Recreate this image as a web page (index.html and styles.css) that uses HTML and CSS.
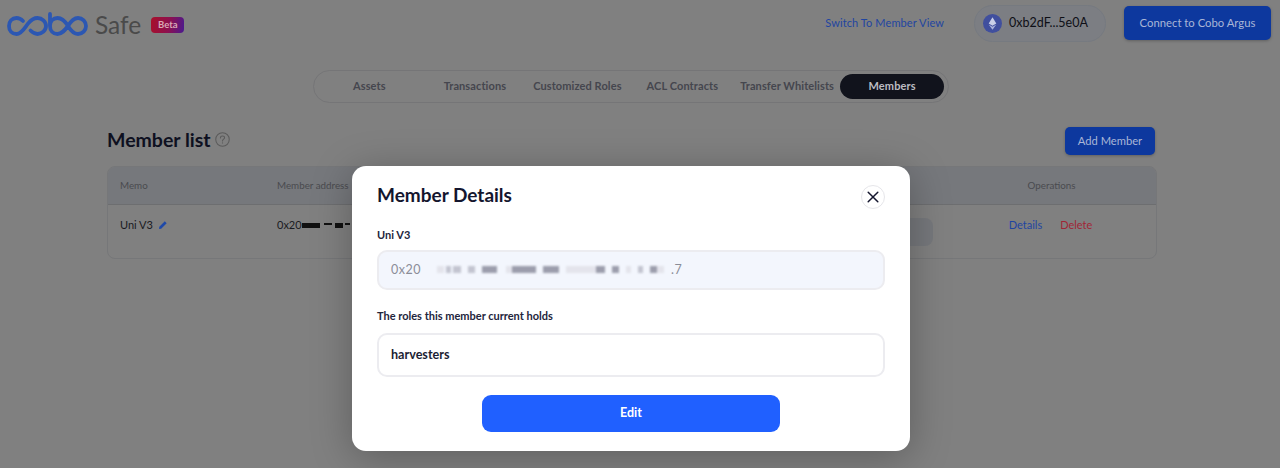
FILE: index.html
```html
<!DOCTYPE html>
<html lang="en">
<head>
<meta charset="utf-8">
<title>Cobo Safe</title>
<link rel="stylesheet" href="styles.css">
</head>
<body>
<div class="page">
  <header class="topbar">
    <div class="brand">
      <svg class="logo" width="82" height="26" viewBox="0 0 82 26" fill="none" stroke="#2c57b2" stroke-width="3.800" stroke-linecap="round">
        <path d="M16 9C14 7 12 6 9.500 6 5 6 2 9.500 2 14S5 22 9.500 22C15 22 18 15 21.500 11 24 8 27 6 30.500 6 35 6 39 9.500 39 14S35 22 30.500 22C27.500 22 25.500 20.500 23.500 18.500"/>
        <path d="M43 2V14C43 18.500 46 22 50.500 22 55 22 58 18 61 14 64 9 67 6 71 6 75.500 6 79 9.500 79 14S75.500 22 71 22C67 22 64 19 61 14 58 9 55 6 50.500 6 46 6 43 9.500 43 14"/>
      </svg>
      <span class="brand-name">Safe</span>
      <span class="beta">Beta</span>
    </div>
    <div class="top-actions">
      <a class="switch-link">Switch To Member View</a>
      <div class="wallet">
        <svg class="eth" width="19" height="19" viewBox="0 0 19 19">
          <circle cx="9.500" cy="9.500" r="9.500" fill="#404f9e"/>
          <path d="M9.500 3.200 5.700 9.600 9.500 11.800 13.300 9.600Z" fill="#c9cfe8"/>
          <path d="M5.700 10.500 9.500 15.800 13.300 10.500 9.500 12.700Z" fill="#aab3dc"/>
        </svg>
        <span>0xb2dF...5e0A</span>
      </div>
      <button class="btn-primary btn-connect">Connect to Cobo Argus</button>
    </div>
  </header>

  <nav class="tabs-wrap">
    <div class="tabs">
      <span class="tab tab-assets">Assets</span>
      <span class="tab tab-tx">Transactions</span>
      <span class="tab tab-roles">Customized Roles</span>
      <span class="tab tab-acl">ACL Contracts</span>
      <span class="tab tab-wl">Transfer Whitelists</span>
      <span class="tab tab-active">Members</span>
    </div>
  </nav>

  <main class="content">
    <div class="list-head">
      <h1 class="list-title"><span class="title-text">Member list</span>
        <svg class="help" width="15" height="15" viewBox="0 0 16 16" fill="none" stroke="#5a5a5a" stroke-width="1.100">
          <circle cx="8" cy="8" r="7.200"/>
          <path d="M5.800 6.300C5.800 5 6.800 4.200 8 4.200S10.200 5 10.200 6.200C10.200 7.600 8 7.800 8 9.500" stroke-linecap="round"/>
          <circle cx="8" cy="11.600" r=".6" fill="#5a5a5a" stroke="none"/>
        </svg>
      </h1>
      <button class="btn-primary btn-add">Add Member</button>
    </div>
    <section class="table">
      <div class="table-row table-header">
        <span>Memo</span>
        <span>Member address</span>
        <span></span>
        <span class="ops">Operations</span>
      </div>
      <div class="table-row table-body">
        <span class="memo">Uni V3
          <svg class="pencil" width="10" height="10" viewBox="0 0 10 10">
            <path d="M1 9 1.300 6.800 6.800 1.300 8.700 3.200 3.200 8.700Z" fill="#1f49a8"/>
          </svg>
        </span>
        <span class="addr">0x20<i class="redact r1"></i><i class="redact r2"></i><i class="redact r3"></i><i class="redact r4"></i></span>
        <span class="tag-cell"><i class="role-tag"></i></span>
        <span class="ops"><a class="link-blue">Details</a><a class="link-red">Delete</a></span>
      </div>
    </section>
  </main>

  <div class="overlay">
    <div class="modal">
      <div class="modal-head">
        <h2 class="modal-title">Member Details</h2>
        <button class="close" aria-label="Close">
          <svg width="12" height="12" viewBox="0 0 12 12" fill="none" stroke="#14162e" stroke-width="1.500" stroke-linecap="round">
            <path d="M1.200 1.200 10.800 10.800M10.800 1.200 1.200 10.800"/>
          </svg>
        </button>
      </div>
      <label class="field-label label-first">Uni V3</label>
      <div class="field field-muted">
        <span>0x20</span>
        <span class="blurred">
          <i class="b w7 g1"></i><i class="b w5 g2"></i><i class="b w8 g2 sp6"></i><i class="b w7 g2 sp6"></i><i class="b w15 g3 sp7"></i><i class="b w6 g1 sp0"></i><i class="b w24 g3 sp6"></i><i class="b w16 g3 sp6"></i><i class="b w7 g1 sp0"></i><i class="b w23 g1 sp0"></i><i class="b w9 g3 sp6"></i><i class="b w7 g3 sp6"></i><i class="b w5 g1 sp6"></i><i class="b w5 g2 sp6"></i><i class="b w7 g3 sp0"></i><i class="b w7 g1"></i>
        </span>
        <span class="tail">.7</span>
      </div>
      <label class="field-label label-second">The roles this member current holds</label>
      <div class="field field-plain">harvesters</div>
      <div class="modal-foot">
        <button class="btn-edit">Edit</button>
      </div>
    </div>
  </div>
</div>
</body>
</html>
```
FILE: styles.css
```css
* { box-sizing: border-box; }
html, body { margin: 0; padding: 0; height: 468px; overflow: hidden; }
body { font-family: "Lato", "Liberation Sans", sans-serif; background: #808080; color: #0d0e18; }
button { font-family: inherit; border: 0; cursor: pointer; }
h1, h2 { margin: 0; }
i { font-style: normal; display: inline-block; }

.page { position: relative; width: 1280px; height: 468px; overflow: hidden; }

.topbar { display: flex; justify-content: space-between; align-items: center; height: 46px; padding: 0 9px 0 7px; }
.brand { display: flex; align-items: center; padding-top: 4px; }
.logo { display: block; }
.brand-name { margin-left: 6px; font-size: 24.500px; line-height: 26px; color: #4a4a4a; }
.beta { margin-left: 10px; width: 33px; height: 16px; border-radius: 4px; background: linear-gradient(100deg, #a8102a, #8c1050 55%, #4a1a90); color: #d9a8b4; font-size: 9.500px; font-weight: 700; text-align: center; line-height: 16px; }

.top-actions { display: flex; align-items: center; }
.switch-link { font-size: 11px; color: #1f45a0; letter-spacing: .1px; padding-bottom: 2px; }
.wallet { display: flex; align-items: center; gap: 7px; margin-left: 30px; width: 132px; height: 37px; padding-left: 8px; border: 1px solid #767a80; border-radius: 19px; background: #7c7e83; font-size: 12.500px; color: #0e0f16; }
.wallet span { padding-bottom: 1px; }
.btn-primary { background: #0d389e; color: #a9b6d6; border-radius: 5px; box-shadow: 0 1px 3px rgba(0,0,0,.25); padding: 0 0 2px; }
.btn-connect { margin-left: 18px; width: 147px; height: 34px; font-size: 11.300px; }

.tabs-wrap { display: flex; justify-content: center; padding: 24px 18px 0 0; }
.tabs { display: flex; align-items: center; flex: none; width: 636px; height: 33px; border: 1px solid #757577; border-radius: 17px; font-size: 11px; font-weight: 700; letter-spacing: .1px; color: #45464e; white-space: nowrap; }
.tab { display: block; flex: none; padding-bottom: 2px; }
.tab-assets { margin-left: 39px; }
.tab-tx { margin-left: 58px; }
.tab-roles { margin-left: 27px; }
.tab-acl { margin-left: 25px; }
.tab-wl { margin-left: 22px; }
.tab-active { margin-left: 6px; width: 104px; height: 25px; border-radius: 13px; background: #11131c; color: #bcbcc2; text-align: center; line-height: 23px; }

.content { padding: 24px 123px 0 107px; }
.list-head { display: flex; justify-content: space-between; align-items: center; height: 28px; padding-right: 2px; }
.list-title { display: flex; align-items: center; gap: 4px; font-size: 19.500px; font-weight: 700; color: #0e1020; }
.title-text { margin-top: -4px; }
.help { display: block; margin-top: -4px; }
.btn-add { width: 90px; height: 28px; font-size: 11.200px; }

.table { width: 1050px; margin-top: 11px; height: 93px; border: 1px solid #767779; border-radius: 8px; overflow: hidden; }
.table-row { display: grid; grid-template-columns: 157px 513px 143px 1fr; padding-left: 12px; }
.table-header { height: 38px; align-items: center; background: #76787c; border-bottom: 1px solid #6d6e70; font-size: 9.800px; color: #4a4b4f; padding-bottom: 2px; }
.table-body { height: 54px; padding-top: 13px; font-size: 11px; line-height: 14px; color: #1a1b22; }
.memo { display: flex; align-items: center; gap: 5px; height: 14px; }
.pencil { display: block; }
.addr { display: flex; align-items: center; height: 14px; }
.redact { height: 5px; background: #111; }
.r1 { width: 18px; }
.r2 { width: 8px; height: 2px; margin: 0 0 3px 4px; }
.r3 { width: 8px; margin-left: 3px; }
.r4 { width: 5px; height: 2px; margin: 0 0 3px 2px; }
.tag-cell { display: flex; justify-content: flex-end; }
.role-tag { width: 60px; height: 28px; border-radius: 8px; background: #76787c; }
.ops { text-align: center; padding-left: 14px; }
.link-blue { color: #1f45a0; margin: 0 10px 0 8px; }
.link-red { color: #a02636; margin: 0 10px 0 8px; }

.overlay { position: absolute; inset: 0; display: flex; justify-content: center; align-items: flex-start; padding: 166px 18px 0 0; }
.modal { width: 558px; height: 285px; padding: 17px 25px 0; background: #fff; border-radius: 14px; box-shadow: 0 6px 40px rgba(0,0,0,.28); }
.modal-head { display: flex; justify-content: space-between; align-items: center; height: 26px; }
.modal-title { font-size: 19px; font-weight: 700; color: #14162e; margin-top: -3px; }
.close { display: flex; align-items: center; justify-content: center; width: 24px; height: 24px; margin-top: 1px; padding: 0; background: #fff; border: 1px solid #e6e6ea; border-radius: 50%; }
.field-label { display: block; font-size: 11px; font-weight: 700; color: #23253c; line-height: 14px; }
.label-first { margin-top: 19px; }
.label-second { margin-top: 19px; }
.field { display: flex; align-items: center; width: 508px; border-radius: 10px; border: 2px solid #ececf0; padding: 0 0 2px 12px; }
.field-muted { margin-top: 8px; height: 40px; background: #f3f6fd; color: #8b8d98; font-size: 12.500px; letter-spacing: .5px; }
.field-plain { margin-top: 10px; height: 44px; background: #fff; color: #1c1e33; font-size: 12.600px; font-weight: 700; }
.blurred { display: flex; align-items: center; margin-left: 16px; filter: blur(1px); }
.b { height: 7px; margin-right: 2px; }
.w5 { width: 5px; } .w6 { width: 6px; } .w7 { width: 7px; } .w8 { width: 8px; } .w9 { width: 9px; } .w15 { width: 15px; } .w16 { width: 16px; } .w23 { width: 23px; } .w24 { width: 24px; }
.sp0 { margin-right: 0; } .sp6 { margin-right: 7px; } .sp7 { margin-right: 9px; }
.g1 { background: #e4e4ec; } .g2 { background: #c3c4d0; } .g3 { background: #9c9dac; }
.tail { margin-left: 5px; }
.modal-foot { display: flex; justify-content: center; margin-top: 18px; }
.btn-edit { width: 298px; height: 37px; border-radius: 9px; background: #2060ff; color: #fff; font-size: 12.500px; font-weight: 700; padding: 0 0 3px; }
```
